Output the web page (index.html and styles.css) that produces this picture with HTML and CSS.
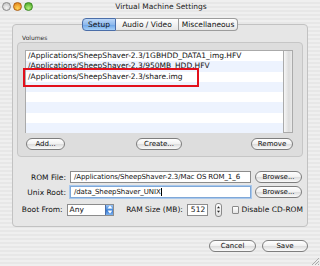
FILE: index.html
```html
<!DOCTYPE html>
<html lang="en">
<head>
  <meta charset="UTF-8">
  <title>Virtual Machine Settings</title>
  <link rel="stylesheet" href="styles.css">
</head>
<body>
  <div class="window">
    <div class="titlebar">
      <div class="lights">
        <span class="light grey"></span>
        <span class="light orange"></span>
        <span class="light green"></span>
      </div>
      <div class="title">Virtual Machine Settings</div>
    </div>

    <div class="tabs">
      <span class="tab active">Setup</span>
      <span class="tab">Audio / Video</span>
      <span class="tab last">Miscellaneous</span>
    </div>

    <div class="panel">
      <div class="group-label">Volumes</div>
      <div class="group">
        <div class="list-wrap">
          <div class="list">
            <div class="row">/Applications/SheepShaver-2.3/1GBHDD_DATA1_img.HFV</div>
            <div class="row alt">/Applications/SheepShaver-2.3/950MB_HDD.HFV</div>
            <div class="row">/Applications/SheepShaver-2.3/share.img</div>
            <div class="row alt"></div>
            <div class="row"></div>
            <div class="row alt"></div>
            <div class="row"></div>
            <div class="row alt"></div>
            <div class="highlight"></div>
          </div>
          <div class="scroller"></div>
        </div>
        <div class="group-buttons">
          <button class="btn add">Add...</button>
          <button class="btn create">Create...</button>
          <button class="btn remove">Remove</button>
        </div>
      </div>

      <div class="form">
        <div class="form-row">
          <label class="label">ROM File:</label>
          <div class="field wide">/Applications/SheepShaver-2.3/Mac OS ROM_1_6</div>
          <button class="btn browse">Browse...</button>
        </div>
        <div class="form-row">
          <label class="label">Unix Root:</label>
          <div class="field wide focus">/data_SheepShaver_UNIX<span class="caret"></span></div>
          <button class="btn browse">Browse...</button>
        </div>
        <div class="form-row boot">
          <label class="label">Boot From:</label>
          <div class="select">
            <span class="select-text">Any</span>
            <span class="select-arrow">
              <svg width="6" height="9" viewBox="0 0 6 9"><path d="M3 0.5 L5.5 3.5 H0.5 Z M3 8.5 L5.5 5.5 H0.5 Z" fill="#fff"/></svg>
            </span>
          </div>
          <span class="ram-label">RAM Size (MB):</span>
          <div class="field ram">512</div>
          <span class="stepper">
            <svg width="6" height="13" viewBox="0 0 6 13"><path d="M3 2.5 L4.8 5 H1.2 Z M3 10.5 L4.8 8 H1.2 Z" fill="#222"/></svg>
          </span>
          <span class="checkbox"></span>
          <span class="check-label">Disable CD-ROM</span>
        </div>
      </div>
    </div>

    <div class="footer">
      <button class="btn cancel">Cancel</button>
      <button class="btn save">Save</button>
    </div>

    <svg class="grip" width="8" height="8" viewBox="0 0 8 8">
      <path d="M8 1 L1 8 M8 4 L4 8 M8 7 L7 8" stroke="#9a9a9a" stroke-width="0.8"/>
    </svg>
  </div>
</body>
</html>
```

FILE: styles.css
```css
* {
  box-sizing: border-box;
}

body {
  margin: 0;
  font-family: "DejaVu Sans", sans-serif;
  font-size: 7.5px;
  color: #111;
}

.window {
  position: relative;
  width: 320px;
  height: 266px;
  background-color: #ececec;
  background-image: repeating-linear-gradient(180deg, #efefef 0px, #efefef 2px, #e7e7e7 2px, #e7e7e7 4px);
  overflow: hidden;
}

/* title bar */
.titlebar {
  position: relative;
  height: 17px;
  display: flex;
  align-items: center;
}

.lights {
  display: flex;
  gap: 2px;
  padding-left: 2px;
  margin-top: -5px;
}

.light {
  width: 9px;
  height: 9px;
  border-radius: 50%;
  border: 1px solid #8a8a8a;
}

.light.grey {
  background: radial-gradient(circle at 50% 70%, #f4f4f4, #bcbcbc);
}

.light.orange {
  border-color: #b06010;
  background: radial-gradient(circle at 50% 75%, #ffd45a, #e07a10);
}

.light.green {
  border-color: #3a8a20;
  background: radial-gradient(circle at 50% 75%, #b4f07a, #3e9e1c);
}

.title {
  flex: 1;
  text-align: center;
  font-size: 7.5px;
  color: #222;
  margin-left: -31px;
  margin-top: -5px;
}

/* tabs */
.tabs {
  position: relative;
  z-index: 1;
  display: flex;
  margin-left: 82px;
  margin-top: 1px;
  height: 13px;
}

.tab {
  height: 13px;
  line-height: 12px;
  padding: 0 7px;
  font-size: 7.5px;
  background: linear-gradient(#ffffff, #e6e6e6);
  border: 1px solid #9c9c9c;
  border-left: none;
}

.tab.active {
  width: 34px;
  padding: 0;
  text-align: center;
  border-left: 1px solid #4b6ea8;
  border-color: #4b6ea8;
  border-radius: 4px 0 0 4px;
  background: linear-gradient(#bcd7f7 0%, #8fbaed 50%, #6aa3e6 51%, #a6d0f8 100%);
}

.tab:nth-child(2) {
  width: 63px;
  padding: 0;
  text-align: center;
}

.tab.last {
  width: 59px;
  padding: 0;
  text-align: center;
  border-radius: 0 4px 4px 0;
}

/* tab panel */
.panel {
  margin: -7px 12px 0 12px;
  height: 203px;
  border: 1px solid #c2c2c2;
  border-radius: 4px;
  background: #e6e6e6;
  padding: 9px 4px 0 4px;
}

.group-label {
  font-size: 6px;
  color: #333;
  padding-left: 5px;
  height: 8px;
  line-height: 8px;
}

.group {
  height: 115px;
  border: 1px solid #c6c6c6;
  border-radius: 4px;
  background: #dddddd;
  padding: 7px 9px 0 7px;
}

.list-wrap {
  display: flex;
  height: 83px;
}

.list {
  position: relative;
  flex: 1;
  background: #fff;
  border: 1px solid #aaa;
  border-right: none;
}

.row {
  height: 10.3px;
  line-height: 10px;
  padding-left: 2px;
  white-space: nowrap;
  overflow: hidden;
}

.row.alt {
  background: #edf3fe;
}

.highlight {
  position: absolute;
  left: -3px;
  top: 17px;
  width: 176px;
  height: 19px;
  border: 2.5px solid #e2101c;
}

.scroller {
  width: 10px;
  border: 1px solid #aaa;
  background: linear-gradient(90deg, #f6f6f6, #dcdcdc 60%, #eaeaea);
}

.group-buttons {
  display: flex;
  margin-top: 5px;
  padding-left: 1px;
}

.btn {
  font-family: "DejaVu Sans", sans-serif;
  font-size: 7px;
  color: #111;
  height: 12px;
  padding: 0;
  border: 1px solid #7e7e7e;
  border-radius: 6px;
  background: linear-gradient(#ffffff 0%, #f2f2f2 45%, #dedede 55%, #fafafa 100%);
  line-height: 10px;
}

.btn.add {
  width: 39px;
}

.btn.create {
  width: 46px;
  margin-left: 71px;
}

.btn.remove {
  width: 42px;
  margin-left: auto;
}

/* form */
.form {
  margin-top: 14px;
}

.form-row {
  display: flex;
  align-items: center;
  height: 12px;
  margin-bottom: 3px;
}

.label {
  width: 49px;
  text-align: right;
  margin-right: 4px;
  white-space: nowrap;
}

.field {
  height: 12px;
  line-height: 10px;
  background: #fff;
  border: 1px solid #8c8c8c;
  padding-left: 3px;
  white-space: nowrap;
  overflow: hidden;
}

.field.wide {
  width: 181px;
  font-size: 7px;
  letter-spacing: -0.1px;
}

.field.focus {
  border: 1px solid #7fa8d8;
  box-shadow: 0 0 0 1px #a9c8ec;
}

.caret {
  display: inline-block;
  width: 1px;
  height: 8px;
  background: #000;
  vertical-align: middle;
}

.btn.browse {
  width: 47px;
  margin-left: 4px;
}

.form-row.boot {
  margin-top: 5px;
  height: 13px;
}

.select {
  display: flex;
  width: 51px;
  height: 12px;
  border: 1px solid #8c8c8c;
  background: #fff;
}

.select-text {
  flex: 1;
  line-height: 10px;
  padding-left: 2px;
}

.select-arrow {
  width: 8px;
  display: flex;
  align-items: center;
  justify-content: center;
  background: linear-gradient(#9cc4f3, #3f86dc 50%, #2f73cf 51%, #7fb4f0);
  border-left: 1px solid #4b6ea8;
}

.ram-label {
  margin-left: 12px;
  white-space: nowrap;
}

.field.ram {
  width: 22px;
  margin-left: 4px;
  text-align: right;
  padding-right: 3px;
}

.stepper {
  display: flex;
  margin-left: 7px;
  width: 7px;
  height: 14px;
  border: 1px solid #8a8a8a;
  border-radius: 3px;
  background: linear-gradient(#ffffff, #e2e2e2);
  align-items: center;
  justify-content: center;
}

.checkbox {
  width: 8px;
  height: 8px;
  margin-left: 10px;
  border: 1px solid #8a8a8a;
  border-radius: 1px;
  background: linear-gradient(#ffffff, #e4e4e4);
}

.check-label {
  margin-left: 2px;
  white-space: nowrap;
}

/* footer */
.footer {
  display: flex;
  justify-content: flex-end;
  padding-right: 12px;
  margin-top: 13px;
}

.btn.cancel {
  width: 47px;
}

.btn.save {
  width: 46px;
  margin-left: 6px;
}

.grip {
  position: absolute;
  right: 1px;
  bottom: 1px;
}
```
